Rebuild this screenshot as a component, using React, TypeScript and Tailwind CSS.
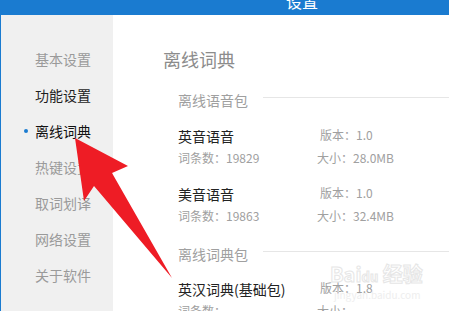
const navItems = [
  { label: "基本设置", tone: "text-[#9a9a9a]" },
  { label: "功能设置", tone: "text-[#1e1e1e]" },
  { label: "离线词典", tone: "text-[#111111]", active: true },
  { label: "热键设置", tone: "text-[#9a9a9a]" },
  { label: "取词划译", tone: "text-[#9a9a9a]" },
  { label: "网络设置", tone: "text-[#9a9a9a]" },
  { label: "关于软件", tone: "text-[#9a9a9a]" },
];

function SectionHeader({ title, className }: { title: string; className?: string }) {
  return (
    <div className={"flex items-center h-5 " + (className ?? "")}>
      <span className="text-[14px] text-[#a0a0a0] leading-5">{title}</span>
      <div className="flex-1 h-px bg-[#e6e6e6] ml-[15px] mb-[6px]" />
    </div>
  );
}

function Pack({
  name,
  version,
  count,
  size,
  className,
}: {
  name: string;
  version: string;
  count?: string;
  size?: string;
  className?: string;
}) {
  return (
    <div className={className}>
      <div className="flex items-center h-5">
        <span className="w-[142px] text-[14px] text-[#222222] leading-5">{name}</span>
        <span className="text-[12px] text-[#a0a0a0] leading-4 -mt-[3px]">版本：{version}</span>
      </div>
      <div className="flex items-center h-4 mt-[4px]">
        <span className="w-[139px] text-[12px] text-[#a0a0a0] leading-4">{count}</span>
        <span className="text-[12px] text-[#a0a0a0] leading-4">{size}</span>
      </div>
    </div>
  );
}

export default function App() {
  return (
    <div
      className="relative w-[449px] h-[311px] overflow-hidden bg-white"
      style={{ fontFamily: '"Noto Sans CJK SC", "Noto Sans", sans-serif' }}
    >
      {/* title bar */}
      <div className="h-[15px] bg-[#1a7bd0] overflow-hidden">
        <div className="pl-[286px] -mt-[9px] text-[16px] leading-5 text-white">设置</div>
      </div>

      <div className="flex h-[296px]">
        {/* sidebar */}
        <div className="w-[113px] border-l border-[#1a7bd0] bg-[#f0f0f0] pt-[26px]">
          {navItems.map((item) => (
            <div key={item.label} className="flex items-center h-9 pl-[23px]">
              <span
                className={
                  "w-[4px] h-[4px] rounded-full " + (item.active ? "bg-[#1a7bd0]" : "bg-transparent")
                }
              />
              <span className={"ml-[7px] text-[14px] leading-5 " + item.tone}>{item.label}</span>
            </div>
          ))}
        </div>

        {/* content */}
        <div className="flex-1 pl-[50px] pt-[32px]">
          <div className="text-[18px] leading-6 text-[#8c8c8c]">离线词典</div>
          <div className="ml-[15px]">
            <SectionHeader title="离线语音包" className="mt-[19px]" />
            <Pack name="英音语音" version="1.0" count="词条数：19829" size="大小：28.0MB" className="mt-4" />
            <Pack name="美音语音" version="1.0" count="词条数：19863" size="大小：32.4MB" className="mt-[18px]" />
            <SectionHeader title="离线词典包" className="mt-5" />
            <Pack name="英汉词典(基础包)" version="1.8" count="词条数：" size="大小：" className="mt-[15px]" />
          </div>
        </div>
      </div>

      {/* watermark */}
      <div className="absolute left-[330px] top-[262px] pointer-events-none select-none">
        <div className="text-[20px] leading-6 font-bold text-transparent [-webkit-text-stroke:1px_#e6e6e6]">
          Bai<span className="text-[13px]">du</span> 经验
        </div>
        <div className="text-[10px] leading-3 text-[#eeeeee] ml-[4px]">jingyan.baidu.com</div>
      </div>

      {/* red arrow */}
      <svg className="absolute left-0 top-0 pointer-events-none" width="449" height="311" viewBox="0 0 449 311">
        <polygon points="75,138 128,166 112,173 172,278 94,186 84,201" fill="#ee1c25" />
      </svg>
    </div>
  );
}
